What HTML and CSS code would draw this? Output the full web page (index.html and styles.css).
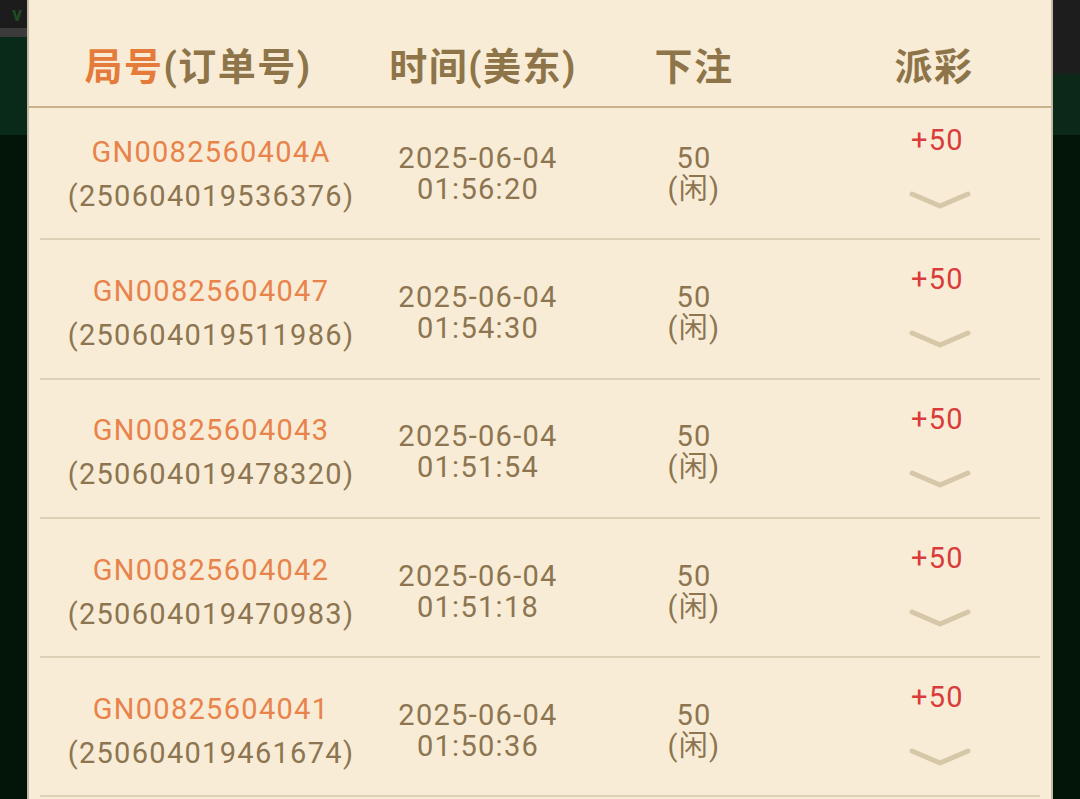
FILE: index.html
```html
<!DOCTYPE html>
<html lang="zh">
<head>
<meta charset="utf-8">
<title>注单记录</title>
<link rel="stylesheet" href="styles.css">
</head>
<body>
<div class="backdrop">
  <div class="topbar">
    <div class="topbar-left"><span class="ghost">v</span></div>
    <div class="topbar-right"></div>
  </div>
  <div class="table-bg"></div>
</div>

<div class="modal">
  <div class="thead">
    <div class="th"><span class="hl">局号</span>(订单号)</div>
    <div class="th">时间(美东)</div>
    <div class="th">下注</div>
    <div class="th th-last">派彩</div>
  </div>
  <div class="tbody">
    <div class="row">
      <div class="cell c-id"><span class="gn">GN0082560404A</span><span>(250604019536376)</span></div>
      <div class="cell c-time"><span>2025-06-04</span><span>01:56:20</span></div>
      <div class="cell c-bet"><span>50</span><span>(闲)</span></div>
      <div class="cell c-pay"><span class="win">+50</span><svg class="chev" width="64" height="22" viewBox="0 0 64 22"><polyline points="4,5 32,17 60,5"/></svg></div>
    </div>
    <div class="row">
      <div class="cell c-id"><span class="gn">GN00825604047</span><span>(250604019511986)</span></div>
      <div class="cell c-time"><span>2025-06-04</span><span>01:54:30</span></div>
      <div class="cell c-bet"><span>50</span><span>(闲)</span></div>
      <div class="cell c-pay"><span class="win">+50</span><svg class="chev" width="64" height="22" viewBox="0 0 64 22"><polyline points="4,5 32,17 60,5"/></svg></div>
    </div>
    <div class="row">
      <div class="cell c-id"><span class="gn">GN00825604043</span><span>(250604019478320)</span></div>
      <div class="cell c-time"><span>2025-06-04</span><span>01:51:54</span></div>
      <div class="cell c-bet"><span>50</span><span>(闲)</span></div>
      <div class="cell c-pay"><span class="win">+50</span><svg class="chev" width="64" height="22" viewBox="0 0 64 22"><polyline points="4,5 32,17 60,5"/></svg></div>
    </div>
    <div class="row">
      <div class="cell c-id"><span class="gn">GN00825604042</span><span>(250604019470983)</span></div>
      <div class="cell c-time"><span>2025-06-04</span><span>01:51:18</span></div>
      <div class="cell c-bet"><span>50</span><span>(闲)</span></div>
      <div class="cell c-pay"><span class="win">+50</span><svg class="chev" width="64" height="22" viewBox="0 0 64 22"><polyline points="4,5 32,17 60,5"/></svg></div>
    </div>
    <div class="row">
      <div class="cell c-id"><span class="gn">GN00825604041</span><span>(250604019461674)</span></div>
      <div class="cell c-time"><span>2025-06-04</span><span>01:50:36</span></div>
      <div class="cell c-bet"><span>50</span><span>(闲)</span></div>
      <div class="cell c-pay"><span class="win">+50</span><svg class="chev" width="64" height="22" viewBox="0 0 64 22"><polyline points="4,5 32,17 60,5"/></svg></div>
    </div>
  </div>
</div>
</body>
</html>
```

FILE: styles.css
```css
* { box-sizing: border-box; }

html, body {
  margin: 0;
  padding: 0;
  width: 1080px;
  height: 799px;
  overflow: hidden;
}

body {
  background: #021208;
  font-family: Roboto, "Noto Sans CJK SC", sans-serif;
  position: relative;
}

/* ---------- backdrop (game screen behind the dialog) ---------- */
.backdrop {
  display: flex;
  flex-direction: column;
  height: 799px;
}

.topbar {
  display: flex;
  height: 135px;
}

.topbar-left {
  flex: 1;
  background: linear-gradient(to bottom, #1b1c1b 0 28px, #3a3b3a 28px 37px, #0a2a19 37px);
  padding: 2px 0 0 12px;
}

.ghost {
  color: #1f4a22;
  font-weight: 700;
  font-size: 20px;
}

.topbar-right {
  flex: 1;
  background: linear-gradient(to bottom, #1d1d1d 0 72px, #0b2819 76px);
}

.table-bg {
  flex: 1;
  background: #031409;
}

/* ---------- dialog ---------- */
.modal {
  position: absolute;
  left: 27px;
  top: 0;
  width: 1026px;
  height: 799px;
  background: #f8ecd6;
  border-left: 2px solid #c4bba6;
  border-right: 2px solid #c4bba6;
  overflow: hidden;
}

.thead {
  display: grid;
  grid-template-columns: 338px 232px 190px 264px;
  height: 108px;
  padding-top: 48px;
  border-bottom: 2px solid #c9b28c;
  position: relative;
  z-index: 1;
}

.th {
  text-align: center;
  font-size: 38px;
  line-height: 38px;
  font-weight: 700;
  letter-spacing: 1.5px;
  color: #8e7449;
}

.th-last { padding-left: 26px; }

.hl { color: #e57b3a; }

.tbody {
  margin-top: -7px;
  padding: 0 11px 0 11px;
}

.row {
  display: grid;
  grid-template-columns: 342px 192px 240px 227px;
  height: 139.3px;
  padding-top: 8px;
  border-bottom: 2px solid #ddd0b4;
  align-items: center;
  color: #8c7550;
  font-size: 29px;
  letter-spacing: 1.3px;
}

.cell {
  display: flex;
  flex-direction: column;
  align-items: center;
  text-align: center;
}

.c-id { line-height: 44px; }
.c-time, .c-bet { line-height: 31px; }

.gn { color: #e8834b; }

.c-pay {
  align-self: start;
  padding-left: 20px;
  padding-top: 15px;
}

.win {
  color: #d83c3b;
  line-height: 32px;
}

.chev {
  margin-top: 33px;
  margin-left: 4px;
  fill: none;
  stroke: #d5c7a7;
  stroke-width: 5;
  stroke-linecap: round;
  stroke-linejoin: round;
}
```
